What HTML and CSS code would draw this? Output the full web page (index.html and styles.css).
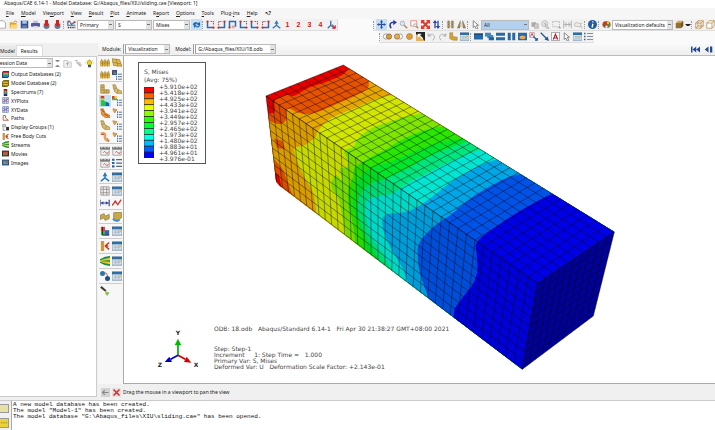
FILE: index.html
```html
<!DOCTYPE html>
<html lang="en">
<head>
<meta charset="utf-8">
<title>Abaqus/CAE 6.14-1</title>
<link rel="stylesheet" href="styles.css">
</head>
<body>
<svg class="sprite" aria-hidden="true">
  <symbol id="new" viewBox="0 0 12 12"><path d="M2 1h5l3 3v7H2z" fill="#fff" stroke="#999"/></symbol>
  <symbol id="open" viewBox="0 0 12 12"><path d="M1 3h4l1 1h4v7H1z" fill="#e2a52c"/><path d="M3 6h9l-2 5H1z" fill="#ffd671"/><path d="M6 3q3-3 5 0" fill="none" stroke="#c65c2a"/></symbol>
  <symbol id="save" viewBox="0 0 12 12"><path d="M1 1h10v10H1z" fill="#35508c"/><path d="M3 1h6v4H3z" fill="#a9c4e8"/><path d="M3 7h6v4H3z" fill="#6b7fa8"/></symbol>
  <symbol id="print" viewBox="0 0 12 12"><path d="M3 1h6v3H3z" fill="#b9bfe0"/><rect y="4" width="12" height="5" rx="1" fill="#56599a"/><path d="M3 8h6v3H3z" fill="#dde"/></symbol>
  <symbol id="db" viewBox="0 0 12 12"><ellipse cx="6" cy="8" rx="4" ry="4" fill="#6b7690"/><path d="M4 0h4v5h2L6 9 2 5h2z" fill="#d81e1e"/></symbol>
  <symbol id="field" viewBox="0 0 12 12"><path d="M1 2v5h10M3 1l3 5 5-4" fill="none" stroke="#3570a8" stroke-width="1.5"/><circle cx="2" cy="2" r="1.3" fill="#d33"/><circle cx="10" cy="3" r="1.3" fill="#d33"/><path d="M1 10h10" stroke="#444" stroke-width="2" stroke-dasharray="2 1"/></symbol>
  <symbol id="sync" viewBox="0 0 12 12"><path d="M1 6q2-5 8-2l1-2 1 5-5-1 2-1Q5 4 4 7z" fill="#1f559c"/><path d="M11 6q-1 6-7 3l-1 2-1-5 5 1-2 1q3 1 4-1z" fill="#2b6fb8"/></symbol>
  <symbol id="csys" viewBox="0 0 12 12"><path d="M2 2v8h8" fill="none" stroke="#2c6cb4" stroke-width="2"/><path d="M6 2h4v4" fill="none" stroke="#d44" stroke-width="1.4" stroke-dasharray="2 1"/><circle cx="2" cy="2" r="1.5" fill="#d22"/><circle cx="10" cy="10" r="1.5" fill="#d22"/></symbol>
  <symbol id="csys2" viewBox="0 0 12 12"><path d="M10 2v8H2" fill="none" stroke="#2c6cb4" stroke-width="2"/><path d="M2 7V2h5" fill="none" stroke="#d44" stroke-width="1.4" stroke-dasharray="2 1"/><circle cx="10" cy="2" r="1.5" fill="#d22"/><circle cx="2" cy="10" r="1.5" fill="#d22"/></symbol>
  <symbol id="csys3" viewBox="0 0 12 12"><path d="M2 10V2h8v7" fill="none" stroke="#2c6cb4" stroke-width="2"/><circle cx="2" cy="10" r="1.5" fill="#d22"/><path d="M5 7h4v4H5z" fill="#f0a0a0"/></symbol>
  <symbol id="triad" viewBox="0 0 12 12"><path d="M6 1v6L1 11M6 7l5 4" fill="none" stroke="#2c78bc" stroke-width="1.8"/><path d="M3 5l3-4 3 4z" fill="#2c78bc"/></symbol>
  <symbol id="triadred" viewBox="0 0 12 12"><path d="M5 1v6L1 11M5 7l5 4" fill="none" stroke="#2c78bc" stroke-width="1.8"/><path d="M7 6l4 5M11 7v4H7" fill="none" stroke="#d22" stroke-width="1.4"/></symbol>
  <symbol id="pan" viewBox="0 0 12 12"><path d="M6 1v10M1 6h10" stroke="#2a4c9c" stroke-width="1.6"/><path d="M4 3l2-3 2 3zM4 9l2 3 2-3zM3 4L0 6l3 2zM9 4l3 2-3 2z" fill="#2a4c9c"/></symbol>
  <symbol id="rotate" viewBox="0 0 12 12"><path d="M4 11Q0 3 8 3" fill="none" stroke="#2b3f9a" stroke-width="2.2"/><path d="M7 0l5 3-5 4z" fill="#2b3f9a"/></symbol>
  <symbol id="zoom" viewBox="0 0 12 12"><circle cx="4.500" cy="4.500" r="3" fill="#dfe6ee" stroke="#9aa4b4"/><path d="M7 7l4 4" stroke="#b88a4c" stroke-width="2"/></symbol>
  <symbol id="zoombox" viewBox="0 0 12 12"><path d="M1 1h8v7H1z" fill="#fff4f2" stroke="#e27a6c"/><circle cx="7" cy="7" r="2" fill="#e8eef6" stroke="#9aa4b4"/><path d="M8 8l3 3" stroke="#b88a4c" stroke-width="2"/></symbol>
  <symbol id="fit" viewBox="0 0 12 12"><path d="M0 0h5L4 2l2 2 2-2-1-2h5v5l-2-1-2 2 2 2 2-1v5H7l1-2-2-2-2 2 1 2H0V7l2 1 2-2-2-2-2 1z" fill="#dc3f34"/></symbol>
  <symbol id="updown" viewBox="0 0 12 12"><path d="M4 11V3M8 1v8" stroke="#2b4aa0" stroke-width="1.8"/><path d="M1 4l3-4 3 4zM5 8l3 4 3-4z" fill="#2b4aa0"/></symbol>
  <symbol id="parallel" viewBox="0 0 12 12"><path d="M2 1h3v10H2zM7 1h3v10H7z" fill="#8a7a55"/><path d="M1 4h10M1 8h10" stroke="#b9a878"/></symbol>
  <symbol id="persp" viewBox="0 0 12 12"><path d="M4 1h1L4 11H0zM7 1h1l4 10H8z" fill="#8a7a55"/><path d="M3 5h6M2 8h8" stroke="#b9a878"/></symbol>
  <symbol id="cursor" viewBox="0 0 12 12"><path d="M3 1l7 6H7l2 4-2 1-2-4-2 2z" fill="#fff" stroke="#666"/></symbol>
  <symbol id="sel" viewBox="0 0 12 12"><path d="M2 3h6v6H2z" fill="#aaa"/><path d="M6 5h5v6H6z" fill="#ccc" stroke="#aaa"/></symbol>
  <symbol id="sel2" viewBox="0 0 12 12"><circle cx="5" cy="5" r="4" fill="#e4e4e4" stroke="#b4b4b4"/><path d="M5 4l6 7H7z" fill="#ddd" stroke="#aaa"/></symbol>
  <symbol id="sel3" viewBox="0 0 12 12"><path d="M1 2h9v7H1z" fill="none" stroke="#aaa" stroke-dasharray="2 1"/><path d="M10 8l2 3H8z" fill="#999"/></symbol>
  <symbol id="sel4" viewBox="0 0 12 12"><path d="M1 1v10M4 3v6M8 3v6M11 1v10M1 6h10" fill="none" stroke="#b0b0b0" stroke-width="1.3"/></symbol>
  <symbol id="sel5" viewBox="0 0 12 12"><path d="M1 8Q0 2 5 4t5 0L8 9z" fill="#eee" stroke="#b0b0b0"/><path d="M9 8l2 3" stroke="#999"/></symbol>
  <symbol id="info" viewBox="0 0 12 12"><circle cx="6" cy="6" r="6" fill="#245aa0"/><path d="M7 2L6 3M6.500 5l-1 5" stroke="#fff" stroke-width="1.800"/></symbol>
  <symbol id="palette" viewBox="0 0 12 12"><ellipse cx="6" cy="6" rx="5.500" ry="4.500" fill="#96562c"/><circle cx="4" cy="4" r="2" fill="#d83020"/><circle cx="8" cy="4" r="1.600" fill="#f0c030"/><circle cx="9" cy="7" r="1.600" fill="#38a048"/><circle cx="6" cy="9" r="1.600" fill="#eee"/></symbol>
  <symbol id="cube" viewBox="0 0 12 12"><path d="M1 4h7v7H1z" fill="#94702c"/><path d="M1 4l3-3h7L8 4z" fill="#d0a85c"/><path d="M8 4l3-3v7l-3 3z" fill="#755318"/></symbol>
  <symbol id="wire" viewBox="0 0 12 12"><path d="M1 4h7v7H1zM4 1h7v7H4zM1 4l3-3M8 4l3-3M8 11l3-3M1 11l3-3" fill="none" stroke="#b78a4a"/></symbol>
  <symbol id="hidden" viewBox="0 0 12 12"><path d="M1 4h7v7H1zM1 4l3-3h7v7l-3 3M8 4l3-3" fill="#fff" stroke="#b78a4a"/></symbol>
  <symbol id="both" viewBox="0 0 12 12"><circle cx="4" cy="6" r="3.500" fill="#fff" stroke="#888"/><circle cx="8" cy="6" r="3.500" fill="#e29b2e" stroke="#7a6440"/></symbol>
  <symbol id="both2" viewBox="0 0 12 12"><circle cx="8" cy="6" r="3.500" fill="#fff" stroke="#888"/><circle cx="4" cy="6" r="3.500" fill="#e8ab48" stroke="#8a7450"/></symbol>
  <symbol id="disc" viewBox="0 0 12 12"><circle cx="6" cy="6" r="4" fill="#e29b2e" stroke="#a8865a"/></symbol>
  <symbol id="swap" viewBox="0 0 12 12"><path d="M0 0h12v12H0z" fill="#222"/><path d="M0 12V3l5 2 7 7z" fill="#e8b25c"/><path d="M3 3l6 6M3 7V3h4" fill="none" stroke="#fff" stroke-width="1.500"/></symbol>
  <symbol id="undo" viewBox="0 0 12 12"><path d="M2 5q7-5 8 2 0 3-3 4" fill="none" stroke="#b4b4b4" stroke-width="1.300"/><path d="M1 1v5h5z" fill="#b4b4b4"/></symbol>
  <symbol id="redo" viewBox="0 0 12 12"><path d="M10 5Q3 0 2 7q0 3 3 4" fill="none" stroke="#b4b4b4" stroke-width="1.300"/><path d="M11 1v5H6z" fill="#b4b4b4"/></symbol>
  <symbol id="part" viewBox="0 0 12 12"><path d="M1 1h4v5l6 1v4H6L1 9z" fill="#d2a436" stroke="#94701c" stroke-width=".6"/></symbol>
  <symbol id="table" viewBox="0 0 12 12"><path d="M0 1h12v10H0z" fill="#dfe7ee" stroke="#6c8aa4"/><path d="M0 1h12v3H0z" fill="#2c6ea4"/><path d="M2 6h8M2 8h8M4 5v5M8 5v5" stroke="#a4b8c8"/><path d="M9 5h2v2H9z" fill="#e2b84c"/></symbol>
  <symbol id="win" viewBox="0 0 12 12"><path d="M0 2h12v8H0z" fill="#236aa8"/><path d="M0 2h12v2H0z" fill="#164a80"/></symbol>
  <symbol id="cascade" viewBox="0 0 12 12"><path d="M0 1h8v5H0zM3 4h8v4H3z" fill="#4186bc"/><path d="M5 7h7v4H5z" fill="#1f639f"/></symbol>
  <symbol id="tileh" viewBox="0 0 12 12"><path d="M0 1h12v4H0zM0 7h12v4H0z" fill="#236aa8"/></symbol>
  <symbol id="tilev" viewBox="0 0 12 12"><path d="M1 1h4v10H1zM7 1h4v10H7z" fill="#236aa8"/></symbol>
  <symbol id="winpic" viewBox="0 0 12 12"><path d="M0 1h12v10H0z" fill="#236aa8"/><ellipse cx="6" cy="7" rx="4" ry="2.500" fill="#e8a854"/></symbol>
  <symbol id="note" viewBox="0 0 12 12"><path d="M1 1h6v6H1z" fill="#fff" stroke="#b77"/><path d="M2 6l2-4 2 4" fill="none" stroke="#a42a34"/><path d="M6 6l5 5M11 8v3H8" fill="none" stroke="#225090" stroke-width="1.500"/></symbol>
  <symbol id="arrow" viewBox="0 0 12 12"><path d="M1 1l8 8" stroke="#225090" stroke-width="1.600"/><path d="M12 12L6 10l4-4z" fill="#225090"/></symbol>
  <symbol id="boxa" viewBox="0 0 12 12"><path d="M.5.5h11v11H.5z" fill="#fff" stroke="#888"/><path d="M3 10l3-7 3 7M4 8h4" fill="none" stroke="#b8202c" stroke-width="1.600"/></symbol>
  <symbol id="list" viewBox="0 0 12 12"><path d="M4 2h8M4 6h8M4 10h8" stroke="#889" stroke-width="1.300"/><path d="M0 2h2M0 6h2M0 10h2" stroke="#36a" stroke-width="2"/></symbol>
  <symbol id="up" viewBox="0 0 12 12"><path d="M1 2h5l1 2h4v7H1z" fill="#f2f2f2" stroke="#bbb"/><path d="M6 9V5M4 7l2-2 2 2" fill="none" stroke="#999"/></symbol>
  <symbol id="link" viewBox="0 0 12 12"><path d="M1 2h3v3h4v3h3M4 5l5 5" fill="none" stroke="#bbb" stroke-width="1.500"/></symbol>
  <symbol id="bulb" viewBox="0 0 12 12"><path d="M6 0v1M0 5h1M11 5h1M1 1l1 1M11 1l-1 1" stroke="#b89820"/><circle cx="6" cy="5" r="3" fill="#f2d622" stroke="#a08c20"/><path d="M4 8h4v3H4z" fill="#35568c"/></symbol>
  <symbol id="t-odb" viewBox="0 0 12 12"><path d="M0 2l2-2h10v10l-2 2H0z" fill="#2b3f7c"/><path d="M2 2h9v2H2z" fill="#e33"/><path d="M2 4h9v2H2z" fill="#fc3"/><path d="M2 6h9v2H2z" fill="#3c4"/><path d="M2 8h9v2H2z" fill="#28d"/></symbol>
  <symbol id="t-mdb" viewBox="0 0 12 12"><path d="M0 3l3-3h9v9l-3 3H0z" fill="#7d6a1c"/><path d="M2 3h8v2H2zM2 7h8v2H2z" fill="#e1c44a"/></symbol>
  <symbol id="t-spec" viewBox="0 0 12 12"><path d="M3 0h6v12H3z" fill="#223"/><path d="M4 1h4v3H4z" fill="#e22"/><path d="M4 4h4v2H4z" fill="#ee2"/><path d="M4 6h4v3H4z" fill="#2c4"/><path d="M4 9h4v2H4z" fill="#22d"/></symbol>
  <symbol id="t-xy" viewBox="0 0 12 12"><path d="M1 1h10v10H1zM1 4h10M1 8h10M4 1v10M8 1v10" fill="#e2ebff" stroke="#5877bd"/><path d="M2 9l3-4 2 2 4-5" fill="none" stroke="#c33"/></symbol>
  <symbol id="t-path" viewBox="0 0 12 12"><path d="M2 1v8h9M2 1h4v4l5 4" fill="none" stroke="#b4564e" stroke-width="1.500"/></symbol>
  <symbol id="t-disp" viewBox="0 0 12 12"><path d="M1 1h5v4H1zM2 6v5h4" fill="#ddd" stroke="#777"/><path d="M7 5h5v6H7z" fill="#333"/></symbol>
  <symbol id="t-cut" viewBox="0 0 12 12"><path d="M1 0h4v12H1z" fill="#c99a3c"/><path d="M6 6l5-4M6 6l5 4M6 6h4" stroke="#cb372c" stroke-width="1.800"/></symbol>
  <symbol id="t-stream" viewBox="0 0 12 12"><path d="M0 4q6-4 12-4v12Q6 12 0 8z" fill="#1f8a40"/><path d="M0 5q6-2 12-3v3Q6 5 0 6zM0 6q6 1 12 1v3Q6 9 0 7z" fill="#e2c932"/></symbol>
  <symbol id="t-movie" viewBox="0 0 12 12"><path d="M0 1h12v10H0z" fill="#3a3030"/><path d="M2 3h8v6H2z" fill="#c9543a"/><path d="M2 6h4v3H2z" fill="#4d9a50"/></symbol>
  <symbol id="t-image" viewBox="0 0 12 12"><path d="M0 1h12v10H0z" fill="#274da0"/><path d="M2 3h8v6H2z" fill="#56a865"/><path d="M5 3h5v3H5z" fill="#d64a38"/></symbol>
  <symbol id="und" viewBox="0 0 12 12"><path d="M0 3h12v7H0z" fill="#e2b23c"/><path d="M0 6h12M3 3v7M6 3v7M9 3v7" stroke="#a88430"/><path d="M1 3l1-2 1 2M5 3l1-2 1 2M9 3l1-2 1 2" fill="#777"/></symbol>
  <symbol id="und2" viewBox="0 0 12 12"><path d="M0 1l9 1 3 8-10-1z" fill="#e0bb50" stroke="#a88430"/><path d="M1 5l9 2M5 1l2 9" stroke="#a88430"/></symbol>
  <symbol id="opt" viewBox="0 0 12 12"><path d="M0 0h6v6H0z" fill="#33508e"/><path d="M1 1h3v2H1z" fill="#e22"/><path d="M2 3h3v2H2z" fill="#3b4"/><path d="M7 5h5M7 8h5M7 11h5" stroke="#678" stroke-width="1.200"/><path d="M5 5h1M5 8h1M5 11h1" stroke="#26b" stroke-width="2"/></symbol>
  <symbol id="shape" viewBox="0 0 12 12"><path d="M1 1h4v6h6v4H1z" fill="#d9b458" stroke="#a08848"/><path d="M1 4h4M1 7h4v4M8 7v4" fill="none" stroke="#a08848"/></symbol>
  <symbol id="shape2" viewBox="0 0 12 12"><path d="M1 1h3l2 5 6 3v3H7L3 9z" fill="#dfbf64" stroke="#a08848"/><path d="M2 5h3M7 7v4" stroke="#a08848"/></symbol>
  <symbol id="contour" viewBox="0 0 12 12"><path d="M1 0h4v6l6 2v4H1z" fill="#28c244"/><path d="M1 0h4v3H1z" fill="#e2332c"/><path d="M1 3h4v2H1z" fill="#f2ce2c"/><path d="M7 7l4 2v3H7z" fill="#2458d0"/></symbol>
  <symbol id="copt" viewBox="0 0 12 12"><path d="M0 0h6v5H0z" fill="#3cbb44"/><path d="M0 0h3v3H0z" fill="#e33"/><path d="M3 0h3v3H3z" fill="#fc3"/><path d="M8 5h4M8 8h4M8 11h4" stroke="#678" stroke-width="1.200"/><path d="M6 5h1M6 8h1M6 11h1" stroke="#26b" stroke-width="2"/></symbol>
  <symbol id="symb" viewBox="0 0 12 12"><path d="M1 1h3l2 5 6 3v3H7L2 8z" fill="#e09c38" stroke="#b07838"/><path d="M2 2l3 3M5 7l5 3" stroke="#d22"/></symbol>
  <symbol id="sopt" viewBox="0 0 12 12"><path d="M1 1l5 1-3 4z" fill="#e0a848" stroke="#c08848"/><path d="M8 5h4M8 8h4M8 11h4" stroke="#678" stroke-width="1.200"/><path d="M6 5h1M6 8h1M6 11h1" stroke="#26b" stroke-width="2"/></symbol>
  <symbol id="super" viewBox="0 0 12 12"><path d="M1 2q6-2 5 3t5 6" fill="none" stroke="#e4a45c" stroke-width="3"/><path d="M1 3h4M8 7l3 4" stroke="#b63a2c"/></symbol>
  <symbol id="clap" viewBox="0 0 12 12"><path d="M1 4h10v7H1z" fill="#f1f1f1" stroke="#999"/><path d="M0 1h12v3H0z" fill="#777"/><path d="M1 2h2M5 2h2M9 2h2" stroke="#ddd"/><path d="M4 8q1-3 3 0t3-1" fill="none" stroke="#c44"/></symbol>
  <symbol id="aopt" viewBox="0 0 12 12"><path d="M5 2h7M5 6h7M5 10h7" stroke="#567" stroke-width="1.500"/><path d="M0 2h3M0 6h3M0 10h3" stroke="#26a" stroke-width="2.500"/></symbol>
  <symbol id="grid" viewBox="0 0 12 12"><path d="M1 1h10v10H1zM1 4h10M1 8h10M4 1v10M8 1v10" fill="#f2eded" stroke="#9a9090"/></symbol>
  <symbol id="dim" viewBox="0 0 12 12"><path d="M0 2v8M11 2v8M1 6h9" stroke="#34488c" stroke-width="1.400"/><path d="M1 6l3-2v4zM10 6L7 4v4z" fill="#34488c"/></symbol>
  <symbol id="xy" viewBox="0 0 12 12"><path d="M0 9l4-5 3 4 4-6" fill="none" stroke="#d2342c" stroke-width="1.600"/><circle cx="4" cy="4" r="1" fill="#a22"/></symbol>
  <symbol id="ply" viewBox="0 0 12 12"><path d="M0 4l5-2 1 3 5-2v5l-5 2-1-3-5 2z" fill="#c9a848" stroke="#97844c"/></symbol>
  <symbol id="ply2" viewBox="0 0 12 12"><path d="M2 1l9-1 1 6-4 4-6-2z" fill="#c9a848" stroke="#97844c"/><path d="M1 8q3 4 8 2" fill="none" stroke="#38c" stroke-width="2"/></symbol>
  <symbol id="cut" viewBox="0 0 12 12"><path d="M1 1h5v5H1z" fill="#d44a36"/><path d="M1 6h5v5H1z" fill="#3bb14c"/><path d="M6 5h5v6H6z" fill="#3a5fb8"/><path d="M3 1v10h8" fill="none" stroke="#222"/></symbol>
  <symbol id="seed" viewBox="0 0 12 12"><circle cx="3" cy="3" r="3" fill="#2878aa"/><circle cx="9" cy="9" r="3" fill="#204e84"/><path d="M5 2q4 0 4 4" fill="none" stroke="#b64a36"/></symbol>
  <symbol id="brush" viewBox="0 0 12 12"><path d="M1 1l6 5" stroke="#473a34" stroke-width="2.500"/><path d="M7 6l4 2-2 4-3-3z" fill="#9ac648"/><path d="M8 10l3-2" stroke="#48a0d0"/></symbol>
  <symbol id="first" viewBox="0 0 12 12"><path d="M1 2v8" stroke="#254a8c" stroke-width="2"/><path d="M7 2v8L2 6zM12 2v8L7 6z" fill="#254a8c"/></symbol>
  <symbol id="prev" viewBox="0 0 12 12"><path d="M6 2v8L1 6zM8 2h3v8H8z" fill="#254a8c"/></symbol>
  <symbol id="back" viewBox="0 0 12 12"><path d="M0 0h12v12H0z" fill="#d2d2d2"/><path d="M10 6H3M5 3L2 6l3 3" fill="none" stroke="#888" stroke-width="1.500"/></symbol>
  <symbol id="cancel" viewBox="0 0 12 12"><path d="M0 0h12v12H0z" fill="#e2e2e2"/><path d="M2 2l8 8M10 2l-8 8" stroke="#e02424" stroke-width="2"/></symbol>
</svg>

<header>
  <div class="title">Abaqus/CAE 6.14-1 - Model Database: G:/Abaqus_files/XIU/sliding.cae [Viewport: 1]</div>
  <nav class="menu">
    <a href="#"><u>F</u>ile</a><a href="#"><u>M</u>odel</a><a href="#">Vie<u>w</u>port</a><a href="#"><u>V</u>iew</a><a href="#"><u>R</u>esult</a><a href="#"><u>P</u>lot</a><a href="#"><u>A</u>nimate</a><a href="#">R<u>e</u>port</a><a href="#"><u>O</u>ptions</a><a href="#"><u>T</u>ools</a><a href="#">Plug-<u>i</u>ns</a><a href="#"><u>H</u>elp</a><a href="#"><b>↖?</b></a>
  </nav>
  <div class="bar">
    <div class="strip strip-file">
      <div class="tools" data-icons="new open save print db db | field"></div>
      <label class="pick pick-s"><select aria-label="Variable type"><option>Primary</option></select></label>
      <label class="pick pick-s"><select aria-label="Variable"><option>S</option></select></label>
      <label class="pick pick-s"><select aria-label="Invariant"><option>Mises</option></select></label>
      <div class="tools" data-icons="sync* | csys csys2 csys3 csys csys csys2 triad #1 #2 #3 #4 triadred"></div>
    </div>
    <div class="strip strip-view">
      <div class="tools" data-icons="| pan* rotate zoom zoombox fit updown | parallel persp | cursor"></div>
      <label class="pick pick-all"><select aria-label="Selection filter"><option>All</option></select></label>
      <div class="tools" data-icons="sel sel2 sel3 sel4 sel5 | info | palette"></div>
      <label class="pick pick-color"><select aria-label="Color code"><option>Visualization defaults</option></select></label>
      <div class="tools" data-icons="cube"></div><span class="caret"></span>
      <div class="tools" data-icons="| wire hidden"></div>
    </div>
  </div>
  <div class="bar bar-second">
    <div class="strip"><div class="tools" data-icons="| both both2 disc swap undo redo part table | win cascade tileh tilev winpic note arrow boxa cursor table list"></div></div>
  </div>
</header>

<main>
  <aside>
    <div class="tabs"><button class="tab">Model</button><button class="tab tab-on">Results</button></div>
    <div class="panel">
      <div class="session">
        <label class="pick"><select aria-label="Tree root"><option>Session Data</option></select></label>
        <span class="spin"></span>
        <div class="tools" data-icons="up link bulb"></div>
      </div>
      <ul class="tree">
        <li data-icon="t-odb">Output Databases (2)</li>
        <li data-icon="t-mdb">Model Database (2)</li>
        <li data-icon="t-spec">Spectrums (7)</li>
        <li data-icon="t-xy">XYPlots</li>
        <li data-icon="t-xy">XYData</li>
        <li data-icon="t-path">Paths</li>
        <li data-icon="t-disp">Display Groups (1)</li>
        <li data-icon="t-cut">Free Body Cuts</li>
        <li data-icon="t-stream">Streams</li>
        <li data-icon="t-movie">Movies</li>
        <li data-icon="t-image">Images</li>
      </ul>
    </div>
  </aside>
  <section class="work">
    <div class="context">
      <label class="named">Module:<span class="pick pick-mod"><select><option>Visualization</option></select></span></label>
      <label class="named">Model:<span class="pick pick-odb"><select><option>G:/Abaqus_files/XIU/18.odb</option></select></span></label>
      <div class="tools playback" data-icons="first prev"></div>
    </div>
    <div class="stage">
      <div class="toolbox">
        <div class="tools" data-icons="und und2 und opt"></div>
        <div class="tools" data-icons="shape shape2 contour* copt symb sopt shape2 sopt super sopt"></div>
        <div class="tools" data-icons="clap clap clap aopt"></div>
        <div class="tools" data-icons="triad table"></div>
        <div class="tools" data-icons="grid table dim xy"></div>
        <div class="tools" data-icons="ply ply2"></div>
        <div class="tools single" data-icons="cut table"></div>
        <div class="tools single" data-icons="t-cut table"></div>
        <div class="tools single" data-icons="t-stream table"></div>
        <div class="tools single" data-icons="seed table"></div>
        <div class="tools single" data-icons="brush"></div>
      </div>
      <div class="viewport">
        <div class="legend">
          <p>S, Mises<br>(Avg: 75%)</p>
          <div class="scale">
            <svg id="ramp" viewBox="0 0 12 72" preserveAspectRatio="none"></svg>
            <ol><li>+5.910e+02</li><li>+5.418e+02</li><li>+4.925e+02</li><li>+4.433e+02</li><li>+3.941e+02</li><li>+3.449e+02</li><li>+2.957e+02</li><li>+2.465e+02</li><li>+1.973e+02</li><li>+1.480e+02</li><li>+9.883e+01</li><li>+4.961e+01</li><li>+3.976e-01</li></ol>
          </div>
        </div>
        <svg class="model" id="model" viewBox="0 0 1110 960" role="img" aria-label="Stress contour on deformed beam">
          <clipPath id="body"><path d="M33 108L265 15L1078 516L848 670L802 928L75 378L63 362Z"/></clipPath>
          <g clip-path="url(#body)" id="bands"></g>
          <path d="M33 108L848 670L802 928L75 378L63 362Z" fill="#000" opacity=".06"/>
          <path d="M848 670L1078 516L1015 768L802 928Z" fill="#00009a"/>
          <path id="mesh" fill="none" stroke="#000" stroke-width="2" stroke-opacity=".62"/>
        </svg>
        <svg class="triad" viewBox="0 0 120 120" role="img" aria-label="Axes">
          <path d="M60 76V40" stroke="#0a0" stroke-width="5"/><path d="M50 46L60 26L70 46Z" fill="#0b0"/>
          <path d="M60 76L38 88" stroke="#00c" stroke-width="5"/><path d="M20 96L34 80L42 96Z" fill="#00c"/>
          <path d="M60 76L82 88" stroke="#c00" stroke-width="5"/><path d="M100 98L78 96L86 80Z" fill="#d00"/>
          <text x="53" y="15">Y</text><text x="-1" y="112">Z</text><text x="107" y="112">X</text>
        </svg>
        <div class="state">
          <pre>ODB: 18.odb   Abaqus/Standard 6.14-1   Fri Apr 30 21:38:27 GMT+08:00 2021</pre>
          <pre>Step: Step-1
Increment     1: Step Time =   1.000
Primary Var: S, Mises
Deformed Var: U   Deformation Scale Factor: +2.143e-01</pre>
        </div>
      </div>
    </div>
    <div class="prompt"><div class="tools" data-icons="back cancel"></div><span>Drag the mouse in a viewport to pan the view</span></div>
  </section>
</main>

<footer>
  <div class="modes"><button class="mode" aria-label="Messages"></button><button class="mode mode-cli">&gt;&gt;&gt;</button></div>
  <pre class="log">A new model database has been created.
The model "Model-1" has been created.
The model database "G:\Abaqus_files\XIU\sliding.cae" has been opened.</pre>
</footer>
<script src="app.js"></script>
</body>
</html>
```
FILE: styles.css
```css
* { box-sizing: border-box; }
html, body { height: 100%; margin: 0; }
body {
  display: flex;
  flex-direction: column;
  overflow: hidden;
  background: #f0f0f0;
  color: #222;
  font: 5px/8px "Noto Sans", sans-serif;
}
button, select { font: inherit; color: inherit; }
button { padding: 0; border: 0; background: none; }
p, ul, ol, pre { margin: 0; padding: 0; list-style: none; }
svg { display: block; }
.sprite { position: absolute; width: 0; height: 0; }

.title { height: 8px; padding-left: 4px; line-height: 6px; background: #fff; white-space: nowrap; }
.menu { display: flex; gap: 7px; height: 11px; padding-left: 6px; line-height: 11px; background: #f6f6f6; white-space: nowrap; }
.menu a { color: inherit; text-decoration: none; }
.menu u { text-underline-offset: 1px; }

.bar { display: flex; height: 12px; background: #fafafa; }
.strip { display: flex; align-items: center; background: #f1f1f1; border-bottom: 1px solid #ddd; }
.strip-file { margin-left: -3px; border-right: 1px solid #ddd; }
.strip-view { margin-left: 35px; }
.bar-second { padding-left: 379px; }

.tools { display: flex; align-items: center; }
.tool { flex: none; width: 11px; height: 11px; padding: 1px; }
.tool svg { width: 9px; height: 9px; }
.tool-on { background: #c2dff5; }
.tool-num { color: #d01818; font: bold 7px/9px "Liberation Sans", sans-serif; }
.grip { flex: none; width: 3px; height: 8px; border-left: 1px dotted #999; }
.caret { width: 6px; margin: 2px 0 0; border: 2px solid transparent; border-top-color: #222; }

.pick { position: relative; display: block; flex: none; height: 10px; margin-right: 1px; background: #fff; border: 1px solid #bbb; }
.pick select { display: block; width: 100%; height: 8px; padding: 0 0 0 2px; border: 0; background: none; appearance: none; line-height: 8px; }
.pick::after { content: ""; position: absolute; top: 0; right: 0; width: 5px; height: 8px; background: linear-gradient(#777, #777) center / 3px 1px no-repeat #e2e2e2; }
.pick-s { width: 37px; }
.pick-all { width: 48px; margin: 0; }
.pick-all, .pick-all::after { background-color: #b4d0ef; }
.pick-color { width: 61px; }

main { display: flex; flex: 1; min-height: 0; }
aside { display: flex; flex: none; flex-direction: column; width: 98px; padding: 2px 1px 3px 0; }
.tabs { display: flex; align-items: flex-end; height: 11px; }
.tab { height: 10px; padding: 0 1px 0 0; background: #e9e9e9; }
.tab-on { height: 11px; padding: 0 4px; background: #fff; border: 1px solid #ddd; border-bottom: 0; }
.panel { flex: 1; background: #fff; border: 1px solid #ccc; border-left: 0; }
.session { display: flex; align-items: center; height: 12px; gap: 2px; }
.session .pick { flex: 1; margin: 0 0 0 -6px; }
.session .tools { width: 34px; }
.spin { width: 5px; height: 7px; border: 2px solid transparent; border-top-color: #888; border-bottom-color: #888; }
.tree { display: grid; grid-auto-rows: 1fr; height: 97px; margin-top: 1px; }
.tree li { display: flex; align-items: center; gap: 2px; padding-left: 2px; white-space: nowrap; }
.tree svg { width: 7px; height: 7px; }

.work { display: flex; flex: 1; flex-direction: column; min-width: 0; }
.context { display: flex; align-items: center; height: 13px; padding: 0 1px 0 4px; gap: 4px; border-bottom: 1px solid #bbb; background: linear-gradient(#fafafa, #eee); }
.named { display: flex; align-items: center; gap: 2px; }
.pick-mod { width: 47px; }
.pick-odb { width: 83px; }
.named .pick { border-left: 3px double #999; }
.playback { gap: 2px; margin-left: auto; }
.stage { display: flex; flex: 1; min-height: 0; }
.toolbox { display: flex; flex: none; flex-direction: column; gap: 1px; width: 26px; padding: 1px; border-right: 1px solid #aaa; background: #f7f7f7; }
.toolbox .tools { display: grid; grid-template-columns: 12px 12px; border-bottom: 1px solid #ccc; }
.toolbox .tool { width: 12px; height: 12px; }
.toolbox .tool svg { width: 10px; height: 10px; }
.toolbox .single { padding-bottom: 1px; }
.toolbox .single:last-child { border: 0; }

.viewport { position: relative; flex: 1; min-width: 0; overflow: hidden; background: #fff; border-bottom: 1px solid #aaa; font-family: "DejaVu Sans", sans-serif; }
.legend { position: absolute; left: 14px; top: 6px; padding: 5px 7px 2px 5px; border: 1px solid #555; line-height: 8px; font-size: 6px; color: #444; }
.scale { display: flex; align-items: center; gap: 5px; }
.scale svg { width: 10px; height: 71px; }
.scale ol { display: grid; grid-auto-rows: 1fr; height: 77px; line-height: 6px; }
.model { position: absolute; left: 131px; top: 4px; width: 370px; height: 320px; }
.triad { position: absolute; left: 34px; top: 274px; width: 40px; height: 40px; overflow: visible; }
.triad text { font: bold 18px "DejaVu Sans", sans-serif; fill: #222; }
.state { position: absolute; left: 90px; top: 270px; display: grid; gap: 14px; color: #444; }
.state pre { font: 6px/6px "DejaVu Sans", sans-serif; }

.prompt { display: flex; align-items: center; height: 16px; padding-left: 2px; gap: 1px; }
footer { display: flex; height: 30px; border-top: 1px solid #ccc; background: #f0f0f0; }
.modes { display: flex; flex-direction: column; gap: 5px; width: 11px; padding: 3px 2px 0 0; }
.mode { width: 9px; height: 9px; background: #e6dfa6; border: 1px solid #999; border-left: 0; }
.mode-cli { height: 10px; background: #ecd23a; font-size: 4px; line-height: 8px; }
.log { flex: 1; padding: 1px 1px 0; background: #fff; border-left: 1px solid #aaa; font: 6px/6px "Liberation Mono", monospace; color: #111; }
```
FILE: app.js
```js
const icon = id => `<svg aria-hidden="true"><use href="#${id}"/></svg>`;

document.querySelectorAll('.tools').forEach(box => {
  box.innerHTML = box.dataset.icons.split(' ').map(name => {
    if (name === '|') return '<span class="grip"></span>';
    if (name[0] === '#') return `<button class="tool tool-num">${name.slice(1)}</button>`;
    const id = name.replace('*', '');
    return `<button class="tool${id === name ? '' : ' tool-on'}" aria-label="${id}">${icon(id)}</button>`;
  }).join('');
});
document.querySelectorAll('.tree li').forEach(li => li.insertAdjacentHTML('afterbegin', icon(li.dataset.icon)));

const ramp = ['#f00', '#ff5d00', '#ffb900', '#e8ff00', '#8bff00', '#2eff00', '#00ff2e', '#00ff8b', '#00ffe8', '#00b9ff', '#005dff', '#00f'];
document.getElementById('ramp').innerHTML = ramp.map((c, i) =>
  `<rect y="${i * 6}" width="12" height="6" fill="${c}" stroke="#222" stroke-width=".7"/>`).join('');

/* Each band starts at its contour line and covers everything toward the free end. */
const bands = [
  ['#e65300', [285,20, 262,45, 215,65, 165,82, 125,104, 110,108, 95,105, 60,122, 60,153, 45,160, 20,150]],
  ['#e6a600', [340,60, 338,85, 300,108, 250,130, 200,152, 160,162, 130,158, 97,145, 94,178, 75,192, 42,183, 20,175]],
  ['#d2e600', [418,104, 370,115, 310,140, 265,158, 220,180, 190,212, 180,232, 150,255, 118,265, 125,300, 150,355, 175,400, 185,465]],
  ['#7ee600', [510,158, 450,170, 395,188, 350,205, 310,235, 295,260, 268,272, 278,300, 276,322, 255,326, 262,362, 244,345, 232,360, 230,385, 250,415, 262,470, 274,530]],
  ['#2ae600', [595,194, 530,205, 470,225, 430,245, 390,270, 350,290, 322,307, 298,325, 295,350, 280,385, 280,430, 290,475, 302,550]],
  ['#00e62a', [632,234, 560,246, 500,265, 440,292, 395,308, 350,322, 322,345, 305,370, 296,410, 297,450, 315,500, 334,575]],
  ['#00e67e', [655,236, 600,258, 520,290, 460,325, 400,352, 370,364, 345,372, 318,400, 308,440, 320,500, 345,550, 382,618]],
  ['#00e6d2', [695,262, 640,282, 575,310, 520,338, 470,362, 430,390, 400,405, 345,415, 332,440, 335,480, 350,530, 380,575, 420,645]],
  ['#00a6e6', [740,295, 690,310, 640,335, 590,365, 545,400, 500,433, 455,455, 400,462, 382,480, 388,520, 410,570, 440,620, 462,675]],
  ['#0053e6', [812,338, 760,352, 700,382, 640,420, 590,462, 560,482, 530,505, 495,545, 488,580, 495,640, 525,725]],
  ['#0000e6', [905,398, 870,412, 800,450, 730,495, 667,545, 665,580, 667,630, 655,670, 625,710, 600,745, 596,780]]
];
const smooth = p => {
  const n = p.length / 2, at = i => { i = Math.max(0, Math.min(n - 1, i)); return [p[2 * i], p[2 * i + 1]]; };
  let d = `M${at(0)}`;
  for (let i = 0; i < n - 1; i++) {
    const [a, b, c, e] = [at(i - 1), at(i), at(i + 1), at(i + 2)];
    d += `C${b[0] + (c[0] - a[0]) / 6} ${b[1] + (c[1] - a[1]) / 6} ${c[0] - (e[0] - b[0]) / 6} ${c[1] - (e[1] - b[1]) / 6} ${c}`;
  }
  return d;
};
document.getElementById('bands').innerHTML = '<path d="M0 0H1110V960H0Z" fill="#e60000"/>' +
  bands.map(([c, p]) => `<path fill="${c}" d="${smooth(p)}V960H1110V0H${p[0]}Z"/>`).join('') +
  '<path d="M57 235L82 243L90 268L66 264Z" fill="#e65300"/>' +
  '<path d="M58 298L85 330L112 405L60 380Z" fill="#e65300"/><path d="M58 335L72 345L80 385L58 370Z" fill="#e60000"/>';

/* Element edges: evenly divided faces, foreshortened along the beam. */
const mix = (a, b, t) => [a[0] + (b[0] - a[0]) * t, a[1] + (b[1] - a[1]) * t];
const A = [33, 108], B = [265, 15], C = [1078, 516], D = [848, 670], E = [802, 928], F = [65, 368], G = [1015, 768];
const face = (a, b, c, d, along, across, k) => {
  let out = '';
  for (let i = 0; i <= along; i++) {
    const t = i / along, s = t / (k - (k - 1) * t);
    out += `M${mix(a, b, s)}L${mix(d, c, s)}`;
  }
  for (let j = 0; j <= across; j++) out += `M${mix(a, d, j / across)}L${mix(b, c, j / across)}`;
  return out;
};
document.getElementById('mesh').setAttribute('d',
  face(A, D, C, B, 35, 10, 1.2) + face(A, D, E, F, 35, 10, 1.2) + face(D, C, G, E, 10, 10, 1.1));
```
